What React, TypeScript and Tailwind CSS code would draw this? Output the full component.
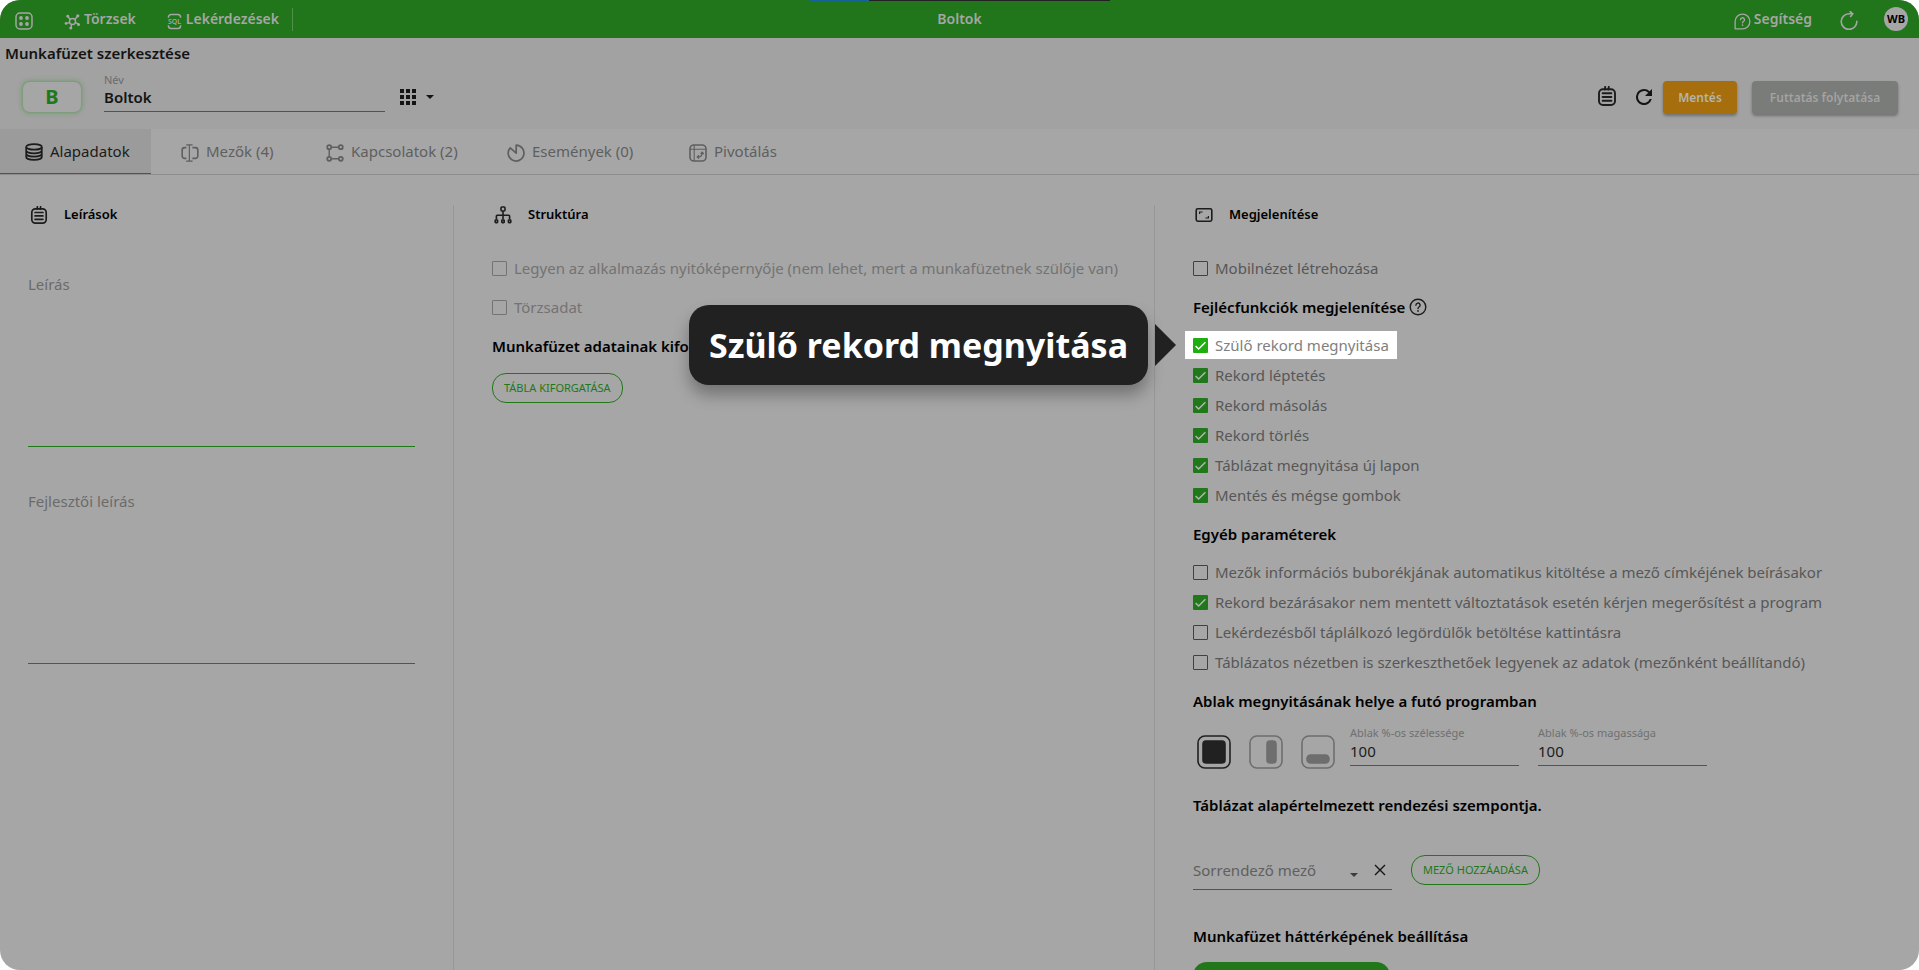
import React from 'react';
import clsx from 'clsx';

interface IconProps {
  className?: string;
}

const AppsIcon: React.FC<IconProps> = ({ className }) => (
  <svg viewBox="0 0 18 18" className={className} fill="none" stroke="currentColor" strokeWidth="1.5">
    <rect x="1" y="1" width="16" height="16" rx="4" />
    <g fill="currentColor" stroke="none">
      <circle cx="6" cy="6" r="1.9" />
      <circle cx="12" cy="6" r="1.9" />
      <circle cx="6" cy="12" r="1.9" />
      <circle cx="12" cy="12" r="1.9" />
    </g>
  </svg>
);

const HubIcon: React.FC<IconProps> = ({ className }) => (
  <svg viewBox="0 0 18 18" className={className} fill="none" stroke="currentColor" strokeWidth="1.5">
    <circle cx="9" cy="9" r="3.2" />
    <path d="M6.5 6.8 4.2 4M11.5 6.8l2.6-3M12 10l2.8 1.6M5.9 10.2l-3.4.8M8 12.2l-.6 3.2" />
    <g fill="currentColor" stroke="none">
      <circle cx="4" cy="3.4" r="1.5" />
      <circle cx="14.6" cy="3" r="1.7" />
      <circle cx="15.4" cy="12.2" r="1.6" />
      <circle cx="2.2" cy="11" r="1.5" />
      <circle cx="7.2" cy="15.8" r="1.6" />
    </g>
  </svg>
);

const SqlIcon: React.FC<IconProps> = ({ className }) => (
  <svg viewBox="0 0 16 18" className={className} fill="none" stroke="currentColor" strokeWidth="1.6">
    <path d="M1.5 5V4.5A3 3 0 0 1 4.5 1.5h7a3 3 0 0 1 3 3V5M1.5 13v.5a3 3 0 0 0 3 3h7a3 3 0 0 0 3-3V13" />
    <text x="8" y="11.7" textAnchor="middle" fontSize="7.4" fontWeight="600" fill="currentColor" stroke="none">
      SQL
    </text>
  </svg>
);

const BubbleHelpIcon: React.FC<IconProps> = ({ className }) => (
  <svg viewBox="0 0 18 18" className={className} fill="none" stroke="currentColor" strokeWidth="1.4">
    <path d="M1.2 16.8V9A7.8 7.8 0 1 1 9 16.8Z" strokeLinejoin="round" />
    <path d="M6.9 7.2A2.1 2.1 0 1 1 10 9c-.7.4-1 .8-1 1.5" strokeLinecap="round" />
    <circle cx="9" cy="12.8" r=".9" fill="currentColor" stroke="none" />
  </svg>
);

const CircleHelpIcon: React.FC<IconProps> = ({ className }) => (
  <svg viewBox="0 0 18 18" className={className} fill="none" stroke="currentColor" strokeWidth="1.4">
    <circle cx="9" cy="9" r="7.8" />
    <path d="M6.9 7.2A2.1 2.1 0 1 1 10 9c-.7.4-1 .8-1 1.5" strokeLinecap="round" />
    <circle cx="9" cy="12.9" r=".9" fill="currentColor" stroke="none" />
  </svg>
);

const ReloadIcon: React.FC<IconProps> = ({ className }) => (
  <svg viewBox="0 0 18 19" className={className} fill="none" stroke="currentColor" strokeWidth="1.6">
    <path d="M16.8 10.4A7.8 7.8 0 1 1 9 2.8h3.4" strokeLinecap="round" />
    <path d="M10.2.6 12.8 2.8 10.6 5.4" strokeLinecap="round" strokeLinejoin="round" />
  </svg>
);

const RefreshIcon: React.FC<IconProps> = ({ className }) => (
  <svg viewBox="4 4 16 16" className={className} fill="currentColor">
    <path d="M17.65 6.35A7.95 7.95 0 0 0 12 4a8 8 0 1 0 7.73 10h-2.08A6 6 0 1 1 12 6c1.66 0 3.14.69 4.22 1.78L13 11h7V4l-2.35 2.35z" />
  </svg>
);

const NotepadIcon: React.FC<IconProps> = ({ className }) => (
  <svg viewBox="0 0 18 20" className={className} fill="none" stroke="currentColor" strokeWidth="1.9">
    <rect x="1" y="3.2" width="16" height="15.8" rx="4" />
    <path d="M7.2.9 6.8 3.6M10.8.9l-.4 2.7M4.6 7.2h8.8M4.6 11h8.8M4.6 14.8h8.8" strokeLinecap="round" />
  </svg>
);

const DatabaseIcon: React.FC<IconProps> = ({ className }) => (
  <svg viewBox="0 0 18 18" className={className} fill="none" stroke="currentColor" strokeWidth="1.7">
    <ellipse cx="9" cy="3.9" rx="7.8" ry="2.8" />
    <path d="M1.2 3.9v10c0 1.6 3.5 2.9 7.8 2.9s7.8-1.3 7.8-2.9v-10M1.2 7.5c0 1.6 3.5 2.9 7.8 2.9s7.8-1.3 7.8-2.9M1.2 10.8c0 1.6 3.5 2.9 7.8 2.9s7.8-1.3 7.8-2.9" />
  </svg>
);

const FieldsIcon: React.FC<IconProps> = ({ className }) => (
  <svg viewBox="0 0 18 18" className={className} fill="none" stroke="currentColor" strokeWidth="1.6">
    <path d="M5.4 3.6H3.6a2.4 2.4 0 0 0-2.4 2.4v6a2.4 2.4 0 0 0 2.4 2.4h1.8M11.4 3.6h3a2.4 2.4 0 0 1 2.4 2.4v6a2.4 2.4 0 0 1-2.4 2.4h-3" />
    <path d="M5.2.8h6.4M5.2 17.2h6.4M8.4.8v16.4" strokeWidth="1.2" />
  </svg>
);

const RelationsIcon: React.FC<IconProps> = ({ className }) => (
  <svg viewBox="0 0 18 18" className={className} fill="none" stroke="currentColor" strokeWidth="1.7">
    <circle cx="3.2" cy="3.2" r="2" />
    <circle cx="14.8" cy="3.2" r="2" />
    <circle cx="3.2" cy="14.8" r="2" />
    <circle cx="14.8" cy="14.8" r="2" />
    <path d="M5.2 3.2h7.6M5.2 14.8h7.6M3.2 5.2v7.6" strokeWidth="1.4" />
  </svg>
);

const EventsIcon: React.FC<IconProps> = ({ className }) => (
  <svg viewBox="0 0 18 18" className={className} fill="none" stroke="currentColor" strokeWidth="1.7">
    <path d="M9.2 9.2V1.2a7.9 7.9 0 1 1-6 2.6Z" strokeLinejoin="round" />
  </svg>
);

const PivotIcon: React.FC<IconProps> = ({ className }) => (
  <svg viewBox="0 0 18 18" className={className} fill="none" stroke="currentColor" strokeWidth="1.6">
    <rect x="1" y="1" width="16" height="16" rx="3.8" />
    <path d="M5.2 1v16M1 5.2h16" strokeWidth="1.1" />
    <path d="M13.2 8.6c.2 3-1.6 4.4-4.8 4.4M11.6 10l1.6-1.8 1.6 1.8M10 11.2 8.2 13l1.8 1.6" strokeWidth="1.2" />
  </svg>
);

const TreeIcon: React.FC<IconProps> = ({ className }) => (
  <svg viewBox="0 0 18 18" className={className} fill="none" stroke="currentColor" strokeWidth="1.6">
    <rect x="7" y="1" width="4" height="4" rx="1" />
    <path d="M9 5v8.4M2.4 13.4V10a.8.8 0 0 1 .8-.8h11.6a.8.8 0 0 1 .8.8v3.4" />
    <rect x="1.2" y="14" width="2.4" height="2.6" rx=".6" />
    <rect x="7.8" y="14" width="2.4" height="2.6" rx=".6" />
    <rect x="14.4" y="14" width="2.4" height="2.6" rx=".6" />
  </svg>
);

const ScreenIcon: React.FC<IconProps> = ({ className }) => (
  <svg viewBox="0 0 18 18" className={className} fill="none" stroke="currentColor" strokeWidth="1.6">
    <rect x="1.2" y="2.8" width="15.6" height="12.4" rx="1.6" />
    <path d="M4.6 8V6h3M13.4 10v2h-3" strokeWidth="1.2" />
  </svg>
);

const GridDotsIcon: React.FC<IconProps> = ({ className }) => (
  <svg viewBox="0 0 16 16" className={className} fill="currentColor">
    <path d="M0 0h4v4H0zM6 0h4v4H6zM12 0h4v4h-4zM0 6h4v4H0zM6 6h4v4H6zM12 6h4v4h-4zM0 12h4v4H0zM6 12h4v4H6zM12 12h4v4h-4z" />
  </svg>
);

const CaretIcon: React.FC<IconProps> = ({ className }) => (
  <svg viewBox="0 0 8 4" className={className} fill="currentColor">
    <path d="M0 0h8L4 4z" />
  </svg>
);

const tabs = [
  { label: 'Alapadatok', icon: DatabaseIcon, active: true, width: 'w-[151px] pl-[25px]' },
  { label: 'Mezők (4)', icon: FieldsIcon, active: false, width: 'w-[145px] ml-[30px]' },
  { label: 'Kapcsolatok (2)', icon: RelationsIcon, active: false, width: 'w-[181px]' },
  { label: 'Események (0)', icon: EventsIcon, active: false, width: 'w-[182px]' },
  { label: 'Pivotálás', icon: PivotIcon, active: false, width: 'w-[145px]' },
];

const headerFunctions = [
  'Szülő rekord megnyitása',
  'Rekord léptetés',
  'Rekord másolás',
  'Rekord törlés',
  'Táblázat megnyitása új lapon',
  'Mentés és mégse gombok',
];

const otherParams = [
  { label: 'Mezők információs buborékjának automatikus kitöltése a mező címkéjének beírásakor', checked: false },
  { label: 'Rekord bezárásakor nem mentett változtatások esetén kérjen megerősítést a program', checked: true },
  { label: 'Lekérdezésből táplálkozó legördülők betöltése kattintásra', checked: false },
  { label: 'Táblázatos nézetben is szerkeszthetőek legyenek az adatok (mezőnként beállítandó)', checked: false },
];

interface CheckRowProps {
  label: string;
  checked?: boolean;
  disabled?: boolean;
  highlighted?: boolean;
}

const CheckRow: React.FC<CheckRowProps> = ({ label, checked = false, disabled = false, highlighted = false }) => (
  <div className={clsx('relative flex w-fit', highlighted && '-mx-2 bg-white px-2')}>
    <label
      className={clsx(
        'flex h-7 items-center gap-[7px] text-[15px] whitespace-nowrap',
        highlighted ? 'text-[#808080]' : disabled ? 'text-[#737373]' : 'text-[#575757]'
      )}
    >
      <span className="grid">
        <input
          type="checkbox"
          defaultChecked={checked}
          disabled={disabled}
          className={clsx(
            'peer col-start-1 row-start-1 h-[15px] w-[15px] appearance-none rounded-[1px] border checked:border-0',
            disabled ? 'border-[#737373]' : 'border-[#404040]',
            highlighted ? 'checked:bg-[#1fad12]' : 'checked:bg-[#21781a]'
          )}
        />
        <svg
          viewBox="0 0 15 15"
          className={clsx(
            'pointer-events-none invisible col-start-1 row-start-1 h-[15px] w-[15px] peer-checked:visible',
            highlighted ? 'text-white' : 'text-[#b4b4b4]'
          )}
          fill="none"
          stroke="currentColor"
          strokeWidth="1.5"
        >
          <path d="M2.6 8 5.6 11 12.4 4.2" />
        </svg>
      </span>
      {label}
    </label>
    {highlighted && (
      <div className="absolute top-1/2 right-full z-10 mr-[9px] flex -translate-y-1/2 items-center gap-[7px]">
        <div
          role="tooltip"
          className="flex h-20 items-center rounded-[20px] bg-[#212121] px-5 text-[34px] font-bold whitespace-nowrap text-white shadow-[0_10px_16px_rgba(0,0,0,0.3)]"
        >
          {label}
        </div>
        <svg viewBox="0 0 21 42" className="h-[42px] w-[21px]" fill="#212121">
          <path d="M0 0 21 21 0 42z" />
        </svg>
      </div>
    )}
  </div>
);

const SectionTitle: React.FC<{ icon: React.FC<IconProps>; children: React.ReactNode }> = ({ icon: Icon, children }) => (
  <h2 className="flex h-5 items-center gap-4 pl-0.5 text-[13px] font-semibold text-black">
    <Icon className="h-[18px] w-[18px] text-[#1c1c1c]" />
    {children}
  </h2>
);

const GroupTitle: React.FC<{ children: React.ReactNode }> = ({ children }) => (
  <h3 className="mt-[13px] mb-3 flex h-6 items-center gap-1 text-[15px] font-semibold whitespace-nowrap text-black">{children}</h3>
);

const OutlineButton: React.FC<{ children: React.ReactNode }> = ({ children }) => (
  <button className="h-[30px] rounded-[14px] border border-[#21781a] px-[11px] text-[11px] whitespace-nowrap text-[#21781a] uppercase">
    {children}
  </button>
);

const SizeField: React.FC<{ id: string; label: string }> = ({ id, label }) => (
  <div className="flex w-[169px] flex-col">
    <label htmlFor={id} className="h-4 text-[11px] leading-4 text-[#707070]">
      {label}
    </label>
    <input id={id} defaultValue="100" className="h-[25px] w-full border-b border-[#21781a] pb-1 text-[15px] text-[#1c1c1c] outline-none" />
  </div>
);

const TopBar: React.FC = () => (
  <header className="relative flex h-[38px] shrink-0 items-center bg-[#21751a] px-[11px] text-sm font-semibold text-[#a6a6a6]">
    <div className="absolute top-0 left-[809px] flex h-px w-[301px]">
      <div className="w-[60px] bg-[#15659b]" />
      <div className="flex-1 bg-[#222222]" />
    </div>
    <nav className="flex flex-1 items-center">
      <button aria-label="Alkalmazások" className="ml-1 pt-1">
        <AppsIcon className="h-[18px] w-[18px]" />
      </button>
      <a href="#torzsek" className="ml-[31px] flex items-center gap-[3px]">
        <HubIcon className="mt-1 h-[17px] w-[17px]" />
        Törzsek
      </a>
      <a href="#lekerdezesek" className="ml-[31px] flex items-center gap-1">
        <SqlIcon className="mt-1 h-[17px] w-[15px]" />
        Lekérdezések
      </a>
      <span className="ml-[13px] h-[23px] w-px bg-[#4f9149]" />
    </nav>
    <h1>Boltok</h1>
    <div className="flex flex-1 items-center justify-end">
      <a href="#segitseg" className="flex items-center gap-[3px]">
        <BubbleHelpIcon className="mt-1 h-[17px] w-[17px]" />
        Segítség
      </a>
      <button aria-label="Újratöltés" className="ml-7 pt-0.5">
        <ReloadIcon className="h-[19px] w-[18px]" />
      </button>
      <button className="ml-[26px] h-6 w-6 rounded-full bg-[#a6a6a6] text-[11px] font-bold text-black">WB</button>
    </div>
  </header>
);

const EditorHeader: React.FC = () => (
  <div className="h-[91px] shrink-0 bg-[#a2a2a2]">
    <p className="px-[5px] pt-[3px] pb-px text-[15px] leading-6 font-semibold text-[#141414]">Munkafüzet szerkesztése</p>
    <div className="flex items-start pr-[21px] pl-[22px]">
      <button className="mt-[15px] h-8 w-[60px] rounded-lg border border-[#7f9c7c] bg-[#a6a6a6] text-xl leading-none font-bold text-[#21781a] shadow-[0_0_5px_#6d9a69]">
        B
      </button>
      <div className="ml-[22px] flex w-[281px] flex-col pt-1.5">
        <label htmlFor="nev" className="h-4 text-[11px] leading-4 text-[#6b6b6b]">
          Név
        </label>
        <input
          id="nev"
          defaultValue="Boltok"
          className="h-6 w-full border-b border-[#21781a] pb-1.5 text-[15px] font-semibold text-[#141414] outline-none"
        />
      </div>
      <button aria-label="Ikon választása" className="mt-[23px] ml-[15px] flex items-center gap-2.5 text-[#141414]">
        <GridDotsIcon className="h-4 w-4" />
        <CaretIcon className="h-1 w-2" />
      </button>
      <div className="mt-[15px] ml-auto flex items-center text-xs font-semibold">
        <button aria-label="Jegyzetek" className="pb-1 text-[#1c1c1c]">
          <NotepadIcon className="h-5 w-[18px]" />
        </button>
        <button aria-label="Frissítés" className="mr-[11px] ml-5 pb-0.5 text-[#141414]">
          <RefreshIcon className="h-4 w-4" />
        </button>
        <button className="h-[33px] w-[74px] rounded bg-[#a66e0c] text-[#b4b4a8] shadow-[0_2px_3px_rgba(0,0,0,0.3)]">Mentés</button>
        <button className="ml-[15px] h-[33px] w-[146px] rounded bg-[#797c79] text-[#a3a3a3] shadow-[0_2px_3px_rgba(0,0,0,0.3)]">
          Futtatás folytatása
        </button>
      </div>
    </div>
  </div>
);

const TabBar: React.FC = () => (
  <div role="tablist" className="flex h-[46px] shrink-0 border-b border-[#8d8d8d]">
    {tabs.map(({ label, icon: Icon, active, width }) => (
      <button
        key={label}
        role="tab"
        aria-selected={active}
        className={clsx(
          'flex items-center gap-[7px] text-[15px] whitespace-nowrap',
          width,
          active ? 'border-b border-[#21781a] bg-[#9b9b9b] text-[#1c1c1c]' : 'text-[#5f5f5f]'
        )}
      >
        <Icon className="mt-0.5 h-[18px] w-[18px]" />
        {label}
      </button>
    ))}
  </div>
);

const DescriptionsPanel: React.FC = () => (
  <section className="border-r border-[#979797] pr-[38px] pl-7">
    <SectionTitle icon={NotepadIcon}>Leírások</SectionTitle>
    <div className="mt-[49px] flex flex-col">
      <label htmlFor="leiras" className="h-5 text-[15px] leading-5 text-[#6b6b6b]">
        Leírás
      </label>
      <textarea id="leiras" className="h-[153px] resize-none border-b border-[#21781a] outline-none" />
    </div>
    <div className="mt-11 flex flex-col">
      <label htmlFor="fejlesztoi-leiras" className="h-5 text-[15px] leading-5 text-[#6b6b6b]">
        Fejlesztői leírás
      </label>
      <textarea id="fejlesztoi-leiras" className="h-[153px] resize-none border-b border-[#21781a] outline-none" />
    </div>
  </section>
);

const StructurePanel: React.FC = () => (
  <section className="border-r border-[#979797] pl-[38px]">
    <SectionTitle icon={TreeIcon}>Struktúra</SectionTitle>
    <div className="mt-[29px] flex flex-col gap-[11px]">
      <CheckRow label="Legyen az alkalmazás nyitóképernyője (nem lehet, mert a munkafüzetnek szülője van)" disabled />
      <CheckRow label="Törzsadat" disabled />
    </div>
    <GroupTitle>Munkafüzet adatainak kiforgatása</GroupTitle>
    <div className="pt-[3px]">
      <OutlineButton>Tábla kiforgatása</OutlineButton>
    </div>
  </section>
);

const DisplayPanel: React.FC = () => (
  <section className="pl-[38px]">
    <SectionTitle icon={ScreenIcon}>Megjelenítése</SectionTitle>
    <div className="mt-[29px]">
      <CheckRow label="Mobilnézet létrehozása" />
    </div>

    <GroupTitle>
      Fejlécfunkciók megjelenítése
      <CircleHelpIcon className="h-[18px] w-[18px] text-[#1c1c1c]" />
    </GroupTitle>
    <div className="flex flex-col gap-0.5">
      {headerFunctions.map((label, i) => (
        <CheckRow key={label} label={label} checked highlighted={i === 0} />
      ))}
    </div>

    <GroupTitle>Egyéb paraméterek</GroupTitle>
    <div className="flex flex-col gap-0.5">
      {otherParams.map((param) => (
        <CheckRow key={param.label} label={param.label} checked={param.checked} />
      ))}
    </div>

    <GroupTitle>Ablak megnyitásának helye a futó programban</GroupTitle>
    <div className="flex items-start pb-[11px] pl-1">
      <div className="mt-2.5 flex gap-[18px] text-[#6e6e6e]">
        <button aria-label="Teljes ablak" className="text-[#212121]">
          <svg viewBox="0 0 34 34" className="h-[34px] w-[34px]" fill="none" stroke="currentColor" strokeWidth="1.6">
            <rect x="1" y="1" width="32" height="32" rx="7" />
            <rect x="6" y="6" width="22" height="22" rx="3" fill="currentColor" />
          </svg>
        </button>
        <button aria-label="Oldalsó ablak">
          <svg viewBox="0 0 34 34" className="h-[34px] w-[34px]" fill="none" stroke="currentColor" strokeWidth="1.6">
            <rect x="1" y="1" width="32" height="32" rx="7" />
            <rect x="18" y="6" width="9" height="22" rx="3" fill="currentColor" />
          </svg>
        </button>
        <button aria-label="Alsó ablak">
          <svg viewBox="0 0 34 34" className="h-[34px] w-[34px]" fill="none" stroke="currentColor" strokeWidth="1.6">
            <rect x="1" y="1" width="32" height="32" rx="7" />
            <rect x="6" y="20" width="22" height="8" rx="3.6" fill="currentColor" />
          </svg>
        </button>
      </div>
      <div className="ml-[15px] flex gap-[19px]">
        <SizeField id="ablak-szelesseg" label="Ablak %-os szélessége" />
        <SizeField id="ablak-magassag" label="Ablak %-os magassága" />
      </div>
    </div>

    <GroupTitle>Táblázat alapértelmezett rendezési szempontja.</GroupTitle>
    <div className="mt-[38px] flex items-start pb-[21px]">
      <div className="relative flex h-[35px] w-[199px] border-b border-[#21781a] pb-1">
        <select aria-label="Sorrendező mező" className="flex-1 appearance-none text-[15px] text-[#5f5f5f] outline-none">
          <option>Sorrendező mező</option>
        </select>
        <CaretIcon className="pointer-events-none absolute top-[18px] right-[34px] h-1 w-2 text-[#3c3c3c]" />
        <button aria-label="Törlés" className="pr-1.5 text-[#141414]">
          <svg viewBox="0 0 12 12" className="h-3 w-3" fill="none" stroke="currentColor" strokeWidth="1.4">
            <path d="m1 1 10 10M11 1 1 11" />
          </svg>
        </button>
      </div>
      <div className="ml-[19px]">
        <OutlineButton>Mező hozzáadása</OutlineButton>
      </div>
    </div>

    <GroupTitle>Munkafüzet háttérképének beállítása</GroupTitle>
    <button aria-label="Háttérkép feltöltése" className="mt-0.5 h-[30px] w-[197px] rounded-[14px] bg-[#21781a]" />
  </section>
);

export default function App() {
  return (
    <div className="h-screen bg-white">
      <div className="flex h-full flex-col overflow-hidden rounded-[20px] bg-[#a6a6a6] font-['Noto_Sans',sans-serif]">
        <TopBar />
        <EditorHeader />
        <TabBar />
        <main className="grid min-h-0 flex-1 grid-cols-[454fr_701fr_764fr] pt-[30px]">
          <DescriptionsPanel />
          <StructurePanel />
          <DisplayPanel />
        </main>
      </div>
    </div>
  );
}
